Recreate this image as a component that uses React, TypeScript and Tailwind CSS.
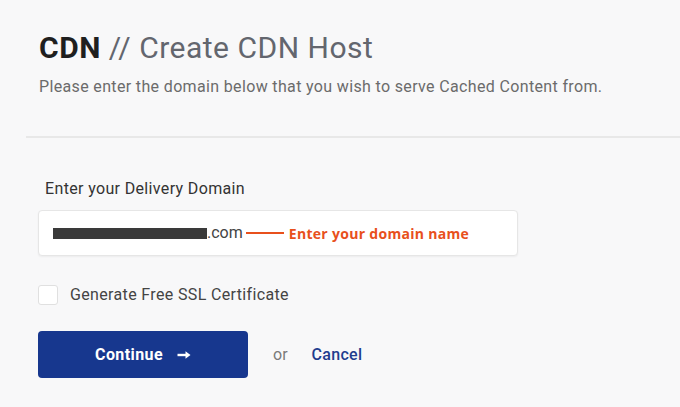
export default function App() {
  return (
    <div className="w-[680px] h-[407px] overflow-hidden bg-[#f8f8f9] font-['Roboto',sans-serif]">
      <div className="pl-[39px] pt-[30px]">
        <h1 className="text-[30px] leading-[36px] text-[#63666e] tracking-[0.5px]">
          <span className="font-bold text-[#1f1f1f]">CDN</span> // Create CDN Host
        </h1>
        <p className="mt-[10px] text-[16px] leading-[22px] text-[#6b6b6b] tracking-[0.35px]">
          Please enter the domain below that you wish to serve Cached Content from.
        </p>
      </div>

      <div className="ml-[26px] mt-[38px] h-[2px] bg-[#e8e8e8]" />

      <div className="pl-[38px] pt-[40px]">
        <label className="block pl-[7px] text-[16px] leading-[22px] text-[#333] tracking-[0.35px]">
          Enter your Delivery Domain
        </label>

        <div className="mt-[10px] w-[480px] h-[46px] flex items-center px-[14px] bg-white border border-[#e6e6e6] rounded-[4px] shadow-[0_1px_2px_rgba(0,0,0,0.05)]">
          <span className="w-[154px] h-[11px] bg-[#3a3a3a]" />
          <span className="text-[16px] text-[#444]">.com</span>
          <span className="ml-[3px] w-[38px] h-[2px] bg-[#e8501c]" />
          <span className="ml-[5px] font-['Open_Sans',sans-serif] font-bold text-[14px] text-[#e8501c] tracking-[0.3px]">
            Enter your domain name
          </span>
        </div>

        <label className="mt-[28px] flex items-center gap-[12px] leading-[22px]">
          <span className="w-[20px] h-[20px] bg-white border border-[#e0e0e0] rounded-[3px]" />
          <span className="text-[16px] text-[#444] tracking-[0.35px]">Generate Free SSL Certificate</span>
        </label>

        <div className="mt-[25px] flex items-center">
          <button className="w-[210px] h-[47px] flex items-center justify-center gap-[14px] bg-[#17378e] rounded-[4px] text-white font-bold text-[16px] tracking-[0.4px]">
            Continue
            <svg width="14" height="10" viewBox="0 0 14 10" fill="none">
              <path d="M0.5 5H10" stroke="white" strokeWidth="2.4" />
              <path d="M8.5 1.2L13.5 5L8.5 8.8Z" fill="white" />
            </svg>
          </button>
          <span className="ml-[25px] text-[16px] text-[#7a7a7a]">or</span>
          <a className="ml-[24px] text-[16px] font-medium text-[#1f3d8e] tracking-[0.3px]">Cancel</a>
        </div>
      </div>
    </div>
  );
}
